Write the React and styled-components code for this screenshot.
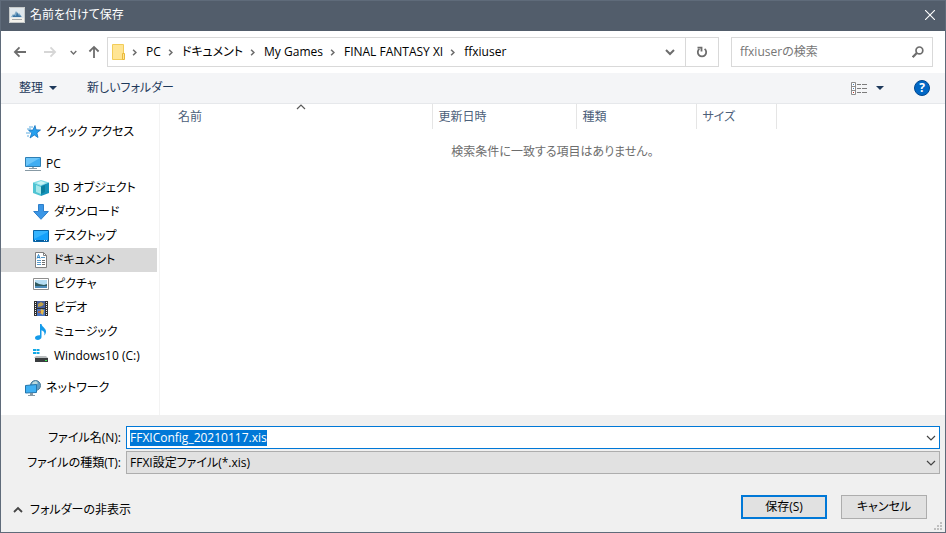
import React, { useEffect, useRef } from 'react';
import styled, { createGlobalStyle } from 'styled-components';

const GlobalStyle = createGlobalStyle`
  * {
    box-sizing: border-box;
  }

  body {
    margin: 0;
  }

  body, button, input, select {
    font-family: "Open Sans", "Noto Sans CJK JP", sans-serif;
    font-size: 12px;
    line-height: 16px;
    font-feature-settings: "palt";
  }

  button {
    padding: 0;
    border: none;
    background: none;
    color: inherit;
    white-space: nowrap;
  }

  svg {
    display: block;
    flex-shrink: 0;
  }
`;

const Window = styled.div`
  display: flex;
  flex-direction: column;
  min-height: 100vh;
  border: 1px solid #5f6b7a;
  background-color: #fff;
  color: #000;
`;

const TitleBar = styled.header`
  display: flex;
  align-items: center;
  gap: 5px;
  height: 30px;
  padding: 0 10px 2px 8px;
  background-color: #525d6b;
  color: #fff;
`;

const WindowTitle = styled.h1`
  flex: 1;
  margin: 0;
  font-size: 12px;
  font-weight: normal;
`;

const IconButton = styled.button`
  display: flex;
  align-items: center;
  justify-content: center;
  width: ${(props) => props.$width || 'auto'};
`;

const AddressRow = styled.nav`
  display: flex;
  align-items: center;
  height: 42px;
  padding: 0 12px 0 4px;
`;

const NavButtons = styled.div`
  display: flex;
  align-items: center;
  width: 102px;
`;

const AddressBox = styled.div`
  display: flex;
  flex: 1;
  height: 30px;
  border: 1px solid #d9d9d9;
`;

const Crumbs = styled.ol`
  display: flex;
  flex: 1;
  align-items: center;
  margin: 0;
  padding: 0 0 0 4px;
  list-style: none;
`;

const Crumb = styled.li`
  display: flex;
  align-items: center;

  svg {
    margin: 0 8px 0 6px;
  }
`;

const RefreshButton = styled(IconButton)`
  border-left: 1px solid #d9d9d9;
`;

const SearchBox = styled.label`
  display: flex;
  align-items: center;
  width: 202px;
  height: 30px;
  margin-left: 12px;
  padding: 0 8px;
  border: 1px solid #d9d9d9;
`;

const SearchInput = styled.input`
  flex: 1;
  min-width: 0;
  padding: 0;
  border: none;
  outline: none;

  &::placeholder {
    color: #767676;
  }
`;

const Toolbar = styled.div`
  display: flex;
  align-items: center;
  height: 31px;
  padding: 0 15px 0 18px;
  border-bottom: 1px solid #e6e8eb;
  background-color: #f4f5f7;
  color: #1e395b;
`;

const ToolButton = styled.button`
  display: flex;
  align-items: center;
  gap: ${(props) => props.$gap || '6px'};
  margin-right: 30px;
`;

const Spacer = styled.div`
  flex: 1;
`;

const Content = styled.main`
  display: flex;
  flex: 1;
`;

const Sidebar = styled.aside`
  width: 159px;
  padding: 16px 2px 15px 0;
  border-right: 1px solid #f3f3f3;
`;

const Tree = styled.ul`
  margin: 0;
  padding: 0;
  list-style: none;
`;

const TreeItem = styled.li`
  margin-bottom: ${(props) => (props.$gapAfter ? '8px' : '0')};
`;

const TreeLink = styled.a`
  display: flex;
  align-items: center;
  gap: 5px;
  height: 24px;
  padding-left: ${(props) => (props.$nested ? '32px' : '24px')};
  background-color: ${(props) => (props.$selected ? '#d9d9d9' : 'transparent')};
  color: #000;
  text-decoration: none;
  white-space: nowrap;
`;

const FileList = styled.section`
  flex: 1;
`;

const FileTable = styled.table`
  width: 100%;
  table-layout: fixed;
  border-collapse: collapse;
`;

const HeaderCell = styled.th`
  position: relative;
  width: ${(props) => props.$width};
  height: 25px;
  padding: 0 0 0 ${(props) => (props.$first ? '18px' : '6px')};
  border-right: ${(props) => (props.$last ? 'none' : '1px solid #e5e5e5')};
  color: #4c607a;
  font-weight: normal;
  text-align: left;
`;

const SortMark = styled.span`
  position: absolute;
  top: -2px;
  left: 50%;
`;

const EmptyCell = styled.td`
  padding: 15px 0;
  color: #6d6d6d;
  text-align: center;
`;

const Footer = styled.footer`
  position: relative;
  padding: 11px 5px 13px;
  background-color: #f0f0f0;
`;

const Fields = styled.div`
  display: grid;
  grid-template-columns: 115px 1fr;
  grid-auto-rows: 23px;
  align-items: center;
  gap: 2px 5px;
`;

const FieldLabel = styled.label`
  text-align: right;
  white-space: nowrap;
`;

const NameBox = styled.div`
  display: flex;
  align-items: center;
  height: 23px;
  border: 1px solid #0078d7;
  background-color: #fff;
`;

const NameInput = styled.input`
  flex: 1;
  min-width: 0;
  padding: 0 3px;
  border: none;
  outline: none;

  &::selection {
    background-color: #0078d7;
    color: #fff;
  }
`;

const SelectBox = styled.div`
  position: relative;

  svg {
    position: absolute;
    top: 7px;
    right: 4px;
    pointer-events: none;
  }
`;

const TypeSelect = styled.select`
  display: block;
  width: 100%;
  height: 23px;
  padding: 0 3px;
  border: 1px solid #adadad;
  border-radius: 0;
  background-color: #e1e1e1;
  color: #000;
  appearance: none;
`;

const Actions = styled.div`
  display: flex;
  align-items: center;
  gap: 14px;
  margin-top: 21px;
  padding: 0 13px 0 7px;
`;

const FolderToggle = styled.button`
  display: flex;
  align-items: center;
  gap: 7px;
  margin-top: 6px;
`;

const PushButton = styled.button`
  width: 86px;
  height: 24px;
  border: ${(props) => (props.$primary ? '2px solid #0078d7' : '1px solid #adadad')};
  background-color: #e1e1e1;
  color: #000;
`;

const ResizeGrip = styled.span`
  position: absolute;
  right: 3px;
  bottom: 2px;
`;

// Icons

const Chevron = ({ size = 8, color = '#6d6d6d', width = 1.6, turn = 0 }) => (
  <svg width={size} height={size} viewBox="0 0 10 10" fill="none" stroke={color} strokeWidth={width}>
    <path d="M1 3l4 4 4-4" transform={`rotate(${turn} 5 5)`} />
  </svg>
);

const Triangle = () => (
  <svg width="8" height="4" viewBox="0 0 8 4">
    <path d="M0 0h8L4 4z" fill="#1e395b" />
  </svg>
);

const AppIcon = () => (
  <svg width="16" height="16" viewBox="0 0 16 16">
    <path d="M0 0h16v16H0z" fill="#dfe7ec" />
    <path d="M.5 .5h15v15H.5z" fill="none" stroke="#c5c9c9" />
    <path d="M2 10l2-3 1 1 2-4 2 3 1-1 3 4z" fill="#7fa9c6" />
    <path d="M4 9l1-1 2 1 1-4 2 4 1-1 1 2H4z" fill="#3873a3" />
    <path d="M1 11h14v4H1z" fill="#f4f2ec" />
    <path d="M3 12.5h10" stroke="#a5a9aa" />
  </svg>
);

const CloseIcon = () => (
  <svg width="10" height="10" viewBox="0 0 10 10" stroke="#fff" strokeWidth="1.1">
    <path d="M0 0l10 10M10 0L0 10" />
  </svg>
);

const Arrow = ({ color, turn = 0 }) => (
  <svg width="14" height="14" viewBox="0 0 14 14" fill="none" stroke={color} strokeWidth="1.8">
    <path d="M13 7H2M6.5 2.4L1.9 7l4.600 4.600" transform={`rotate(${turn} 7 7)`} />
  </svg>
);

const FolderIcon = () => (
  <svg width="13" height="16" viewBox="0 0 13 16">
    <path d="M.5 .5h11v15H.5z" fill="#ffe594" stroke="#f2cc59" />
    <path d="M10.5 9.5h2v6h-2z" fill="#ffe594" stroke="#e9b93b" />
  </svg>
);

const RefreshIcon = () => (
  <svg width="12" height="12" viewBox="0 0 12 12" fill="none" stroke="#6d6d6d" strokeWidth="1.8">
    <path d="M8.6 2.9a4.2 4.2 0 1 1-5.2 0" />
    <path d="M1.5 1.6h4v4" />
  </svg>
);

const SearchIcon = () => (
  <svg width="12" height="12" viewBox="0 0 12 12" fill="none" stroke="#6d6d6d" strokeWidth="1.7">
    <circle cx="7.4" cy="4.4" r="3.4" />
    <path d="M4.8 7L.7 11.2" strokeWidth="2.2" />
  </svg>
);

const ViewIcon = () => (
  <svg width="17" height="13" viewBox="0 0 17 13">
    <path d="M.5 .5h4v12h-4zM.5 4.5h4M.5 8.5h4" fill="#fff" stroke="#8c8c8c" />
    <path d="M2 2h1v1H2z" fill="#4a7ebb" />
    <path d="M2 6h1v1H2z" fill="#4a7ebb" />
    <path d="M2 10h1v1H2z" fill="#c0392b" />
    <path d="M6 2.5h4M11 2.5h5M6 6.5h4M11 6.5h5M6 10.5h4M11 10.5h5" stroke="#7c7c7c" />
  </svg>
);

const HelpMark = styled.span`
  display: block;
  width: 16px;
  height: 16px;
  border: 1px solid #00478f;
  border-radius: 50%;
  background-color: #0067c5;
  color: #fff;
  font-size: 12px;
  font-weight: bold;
  line-height: 14px;
  text-align: center;
`;

const StarIcon = () => (
  <svg width="16" height="16" viewBox="0 0 16 16">
    <path d="M10 1.5l1 4.3 4.500.2-3.600 2.900 1.100 4.600-3.700-2.500-4.300 3 1.700-4.900-3.200-2.900 4.400-.1z" fill="#27a0ee" stroke="#1574c0" strokeWidth=".8" />
    <path d="M4 3h4M2 5h4M1 9h4M2 12h2" stroke="#4ca4dd" strokeWidth=".9" />
  </svg>
);

const PcIcon = () => (
  <svg width="16" height="16" viewBox="0 0 16 16">
    <path d="M.5 1.5h15v9H.5z" fill="#6cc6fa" stroke="#2e7fb4" />
    <path d="M1 10L15 2v8z" fill="#3fadf2" />
    <path d="M7 11h2v2H7z" fill="#9ab1bd" />
    <path d="M4 12.5h8M0 14.5h16" stroke="#8799a4" />
  </svg>
);

const CubeIcon = () => (
  <svg width="16" height="16" viewBox="0 0 16 16">
    <path d="M8 0l8 2.5-8 3.3L0 2.5z" fill="#7fdde6" />
    <path d="M0 2.5l8 3.3V16l-8-3z" fill="#4fc4d3" />
    <path d="M16 2.5L8 5.8V16l8-3z" fill="#1593ba" />
    <path d="M8 1l5 2-5 2-5-2z" fill="#c9f4f5" />
    <path d="M3 5l5 2v7l-5-2z" fill="#a5e8ea" />
    <path d="M8 7l4-2v7l-4 2z" fill="#0a7f9e" />
  </svg>
);

const DownloadIcon = () => (
  <svg width="16" height="16" viewBox="0 0 16 16">
    <path d="M5.5 .5h5v7h4.800L8 15.300.7 7.500h4.800z" fill="#3a96e6" stroke="#2e7fca" />
  </svg>
);

const DesktopIcon = () => (
  <svg width="16" height="16" viewBox="0 0 16 16">
    <path d="M.5 2.5h15v11H.5z" fill="#14a0fb" stroke="#0765a8" />
    <path d="M1 11L15 4V3H1z" fill="#35b4ff" />
    <path d="M1 12.5h14" stroke="#075a98" />
    <path d="M2 12.5h1M11 12.5h1M13 12.5h1" stroke="#d8efff" />
  </svg>
);

const DocumentIcon = () => (
  <svg width="16" height="16" viewBox="0 0 16 16">
    <path d="M2.500 .5h8l3 3v12h-11z" fill="#fff" stroke="#7f7f7f" />
    <path d="M10.5 .5v3h3" fill="none" stroke="#7f7f7f" />
    <path d="M4 6.500l1.500-4 1.500 4M4 5.500h3" fill="none" stroke="#2b86c8" />
    <path d="M8 5.5h4M4 8.500h4M4 10.500h4M4 12.500h4" stroke="#5a9bca" />
    <path d="M9 8.500h3M9 10.500h3M9 12.500h3" stroke="#707070" />
  </svg>
);

const PictureIcon = () => (
  <svg width="16" height="16" viewBox="0 0 16 16">
    <path d="M.5 2.5h15v11H.5z" fill="#fff" stroke="#8e8e8e" />
    <path d="M2 4h12v8H2z" fill="#b5ddf3" />
    <path d="M2 6l4 2 5 1 3-1v2H2z" fill="#2f5a5f" />
    <path d="M2 10h12v2H2z" fill="#4d8bb8" />
  </svg>
);

const VideoIcon = () => (
  <svg width="16" height="16" viewBox="0 0 16 16">
    <path d="M1 1h14v15H1z" fill="#303030" />
    <path d="M4 1h8v7H4z" fill="#465f9c" />
    <path d="M4 9h8v7H4z" fill="#4774c3" />
    <path d="M5 4l3-2 3 2-2 2-4 1z" fill="#bea149" />
    <path d="M8 9l3 1-1 5-3-2z" fill="#e2b94d" />
    <path d="M5 11h3v2H5z" fill="#ad6a4b" />
    <path d="M2.5 2v13M13.5 2v13" stroke="#f2f2f2" strokeDasharray="1 1" />
  </svg>
);

const MusicIcon = () => (
  <svg width="16" height="16" viewBox="0 0 16 16">
    <path d="M7 0h1.500c.3 3 4.500 4 4.500 7.500 0 1.500-.7 3-1.700 4 .7-3-.5-4.500-2.800-5.200V13c0 1.600-1.700 3-3.700 3C3.200 16 2 15.200 2 13.800 2 12.100 4 11 7 11.200z" fill="#159bea" />
  </svg>
);

const DriveIcon = () => (
  <svg width="16" height="16" viewBox="0 0 16 16">
    <path d="M0 1h3v2H0zM3.500 1h3v2h-3zM0 4h3v2H0zM3.500 4h3v2h-3z" fill="#12a9e6" />
    <path d="M3 8h10l2 2H1z" fill="#b9bdbf" />
    <path d="M2 10h13v4H2z" fill="#393d3f" />
    <path d="M12 12h2v1h-2z" fill="#38ec50" />
  </svg>
);

const NetworkIcon = () => (
  <svg width="16" height="16" viewBox="0 0 16 16">
    <circle cx="10.5" cy="5.500" r="5" fill="#5f9dc4" stroke="#4b7995" />
    <path d="M8 2l3-1 2 2-2 2 1 3-3-1-2-3z" fill="#bcd9dc" />
    <path d="M.5 5.500l11-1v8l-11 .5z" fill="#3fb0f3" stroke="#2475ab" />
    <path d="M5 13h3v2H5z" fill="#8799a4" />
    <path d="M3 15.500h7" stroke="#8799a4" />
  </svg>
);

const GripIcon = () => (
  <svg width="8" height="8" viewBox="0 0 8 8">
    <path d="M6 0h2v2H6zM3 3h2v2H3zM6 3h2v2H6zM0 6h2v2H0zM3 6h2v2H3zM6 6h2v2H6z" fill="#bfbfbf" />
  </svg>
);

const crumbs = ['PC', 'ドキュメント', 'My Games', 'FINAL FANTASY XI', 'ffxiuser'];

const places = [
  { name: 'クイック アクセス', icon: StarIcon, gapAfter: true },
  { name: 'PC', icon: PcIcon },
  { name: '3D オブジェクト', icon: CubeIcon, nested: true },
  { name: 'ダウンロード', icon: DownloadIcon, nested: true },
  { name: 'デスクトップ', icon: DesktopIcon, nested: true },
  { name: 'ドキュメント', icon: DocumentIcon, nested: true, selected: true },
  { name: 'ピクチャ', icon: PictureIcon, nested: true },
  { name: 'ビデオ', icon: VideoIcon, nested: true },
  { name: 'ミュージック', icon: MusicIcon, nested: true },
  { name: 'Windows10 (C:)', icon: DriveIcon, nested: true, gapAfter: true },
  { name: 'ネットワーク', icon: NetworkIcon },
];

const App = () => {
  const nameRef = useRef(null);

  // The suggested file name starts out selected
  useEffect(() => {
    nameRef.current.focus();
    nameRef.current.select();
  }, []);

  return (
    <>
      <GlobalStyle />
      <Window>
        <TitleBar>
          <AppIcon />
          <WindowTitle>名前を付けて保存</WindowTitle>
          <IconButton aria-label="閉じる">
            <CloseIcon />
          </IconButton>
        </TitleBar>

        <AddressRow>
          <NavButtons>
            <IconButton $width="30px" aria-label="戻る">
              <Arrow color="#6d6d6d" />
            </IconButton>
            <IconButton $width="30px" aria-label="進む">
              <Arrow color="#d6d6d6" turn={180} />
            </IconButton>
            <IconButton $width="17px" aria-label="最近表示した場所">
              <Chevron size={7} width={2} />
            </IconButton>
            <IconButton $width="24px" aria-label="上へ">
              <Arrow color="#6d6d6d" turn={90} />
            </IconButton>
          </NavButtons>
          <AddressBox>
            <Crumbs>
              <li>
                <FolderIcon />
              </li>
              {crumbs.map((name) => (
                <Crumb key={name}>
                  <Chevron size={7} width={2.2} turn={-90} />
                  <button>{name}</button>
                </Crumb>
              ))}
            </Crumbs>
            <IconButton $width="30px" aria-label="以前の場所">
              <Chevron size={10} width={2} />
            </IconButton>
            <RefreshButton $width="33px" aria-label="最新の情報に更新">
              <RefreshIcon />
            </RefreshButton>
          </AddressBox>
          <SearchBox>
            <SearchInput type="text" aria-label="検索" placeholder="ffxiuserの検索" />
            <SearchIcon />
          </SearchBox>
        </AddressRow>

        <Toolbar>
          <ToolButton>
            整理
            <Triangle />
          </ToolButton>
          <ToolButton>新しいフォルダー</ToolButton>
          <Spacer />
          <ToolButton $gap="8px" aria-label="表示方法">
            <ViewIcon />
            <Triangle />
          </ToolButton>
          <IconButton aria-label="ヘルプ">
            <HelpMark>?</HelpMark>
          </IconButton>
        </Toolbar>

        <Content>
          <Sidebar>
            <Tree>
              {places.map(({ name, icon: Icon, nested, selected, gapAfter }) => (
                <TreeItem key={name} $gapAfter={gapAfter}>
                  <TreeLink href="#" $nested={nested} $selected={selected}>
                    <Icon />
                    {name}
                  </TreeLink>
                </TreeItem>
              ))}
            </Tree>
          </Sidebar>
          <FileList>
            <FileTable>
              <thead>
                <tr>
                  <HeaderCell $first $width="272px">
                    名前
                    <SortMark>
                      <Chevron size={10} color="#5a5a5a" width={1.2} turn={180} />
                    </SortMark>
                  </HeaderCell>
                  <HeaderCell $width="144px">更新日時</HeaderCell>
                  <HeaderCell $width="120px">種類</HeaderCell>
                  <HeaderCell $width="80px">サイズ</HeaderCell>
                  <HeaderCell $last />
                </tr>
              </thead>
              <tbody>
                <tr>
                  <EmptyCell colSpan={5}>検索条件に一致する項目はありません。</EmptyCell>
                </tr>
              </tbody>
            </FileTable>
          </FileList>
        </Content>

        <Footer>
          <Fields>
            <FieldLabel htmlFor="file-name">ファイル名(N):</FieldLabel>
            <NameBox>
              <NameInput id="file-name" type="text" ref={nameRef} defaultValue="FFXIConfig_20210117.xis" />
              <IconButton $width="17px" aria-label="履歴">
                <Chevron size={10} color="#444" width={1.2} />
              </IconButton>
            </NameBox>
            <FieldLabel htmlFor="file-type">ファイルの種類(T):</FieldLabel>
            <SelectBox>
              <TypeSelect id="file-type">
                <option>FFXI設定ファイル(*.xis)</option>
              </TypeSelect>
              <Chevron size={10} color="#444" width={1.2} />
            </SelectBox>
          </Fields>
          <Actions>
            <FolderToggle>
              <Chevron size={10} color="#444" width={1.8} turn={180} />
              フォルダーの非表示
            </FolderToggle>
            <Spacer />
            <PushButton $primary>保存(S)</PushButton>
            <PushButton>キャンセル</PushButton>
          </Actions>
          <ResizeGrip>
            <GripIcon />
          </ResizeGrip>
        </Footer>
      </Window>
    </>
  );
};

export default App;
